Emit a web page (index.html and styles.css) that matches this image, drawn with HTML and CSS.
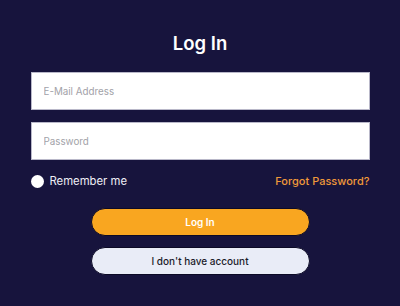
FILE: index.html
```html
<!DOCTYPE html>
<html lang="en">
<head>
<meta charset="utf-8">
<title>Log In</title>
<link rel="stylesheet" href="styles.css">
</head>
<body>
<main class="page">
  <form class="login">
    <h1 class="title">Log In</h1>
    <input class="field" type="email" placeholder="E-Mail Address">
    <input class="field" type="password" placeholder="Password">
    <div class="options">
      <label class="remember"><span class="dot"></span>Remember me</label>
      <a class="forgot" href="#">Forgot Password?</a>
    </div>
    <div class="actions">
      <button type="button" class="btn btn-primary">Log In</button>
      <button type="button" class="btn btn-secondary">I don't have account</button>
    </div>
  </form>
</main>
</body>
</html>
```
FILE: styles.css
```css
* { box-sizing: border-box; }
html, body { margin: 0; padding: 0; }
body {
  width: 400px;
  height: 306px;
  background: #17143d;
  font-family: "Inter", "Noto Sans", sans-serif;
  overflow: hidden;
}
.page {
  display: flex;
  justify-content: center;
  padding-top: 29px;
}
.login {
  width: 339px;
  display: flex;
  flex-direction: column;
}
.title {
  margin: 0 0 15px;
  text-align: center;
  color: #ffffff;
  font-size: 18.5px;
  line-height: 28px;
  font-weight: 600;
}
.field {
  height: 38px;
  margin: 0 0 12px;
  padding: 0 12px;
  border: 1px solid #b9b8c9;
  background: #ffffff;
  font-family: inherit;
  font-size: 9.8px;
  color: #333;
  outline: none;
}
.field + .field { margin-bottom: 11px; }
.field::placeholder { color: #a2a2a8; }
.options {
  display: flex;
  justify-content: space-between;
  align-items: center;
  height: 20px;
}
.remember {
  display: flex;
  align-items: center;
  gap: 6px;
  color: #eeeef5;
  font-size: 11.3px;
}
.dot {
  width: 13px;
  height: 13px;
  border-radius: 50%;
  background: #ffffff;
}
.forgot {
  color: #f0993a;
  font-size: 11px;
  font-weight: 500;
  text-decoration: none;
}
.actions {
  display: flex;
  flex-direction: column;
  align-items: center;
  gap: 11px;
  margin-top: 17px;
}
.btn {
  width: 219px;
  height: 28px;
  border: 1px solid #0c0a26;
  border-radius: 14px;
  font-family: inherit;
  font-size: 10px;
  font-weight: 600;
  cursor: pointer;
}
.btn-primary {
  background: #f9a620;
  color: #ffffff;
}
.btn-secondary {
  background: #e9ecf7;
  color: #1b1b2a;
  font-weight: 500;
}
```
